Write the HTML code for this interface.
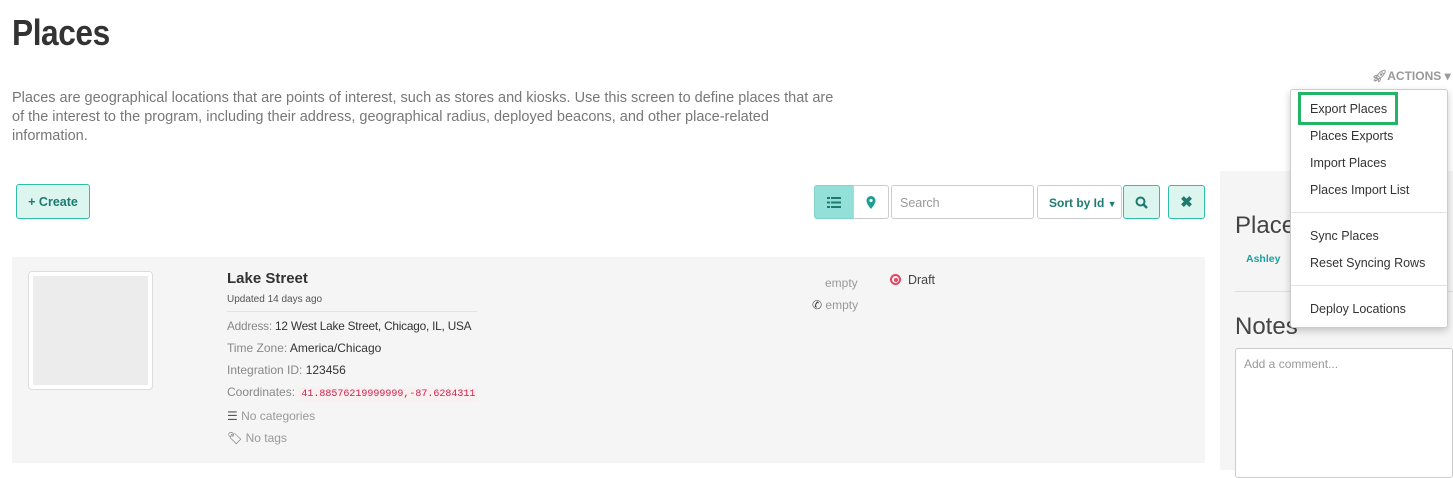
<!DOCTYPE html>
<html><head><style>
*{box-sizing:border-box;margin:0;padding:0}
body{width:1453px;height:470px;overflow:hidden;background:#fff;font-family:"Liberation Sans",sans-serif;color:#333;position:relative}
.a{position:absolute;white-space:nowrap}
h1{position:absolute;left:12px;top:12px;font-size:36px;font-weight:bold;color:#333;letter-spacing:-0.5px;transform:scaleX(0.88);transform-origin:left}
.desc{left:12px;top:89px;width:830px;font-size:14.5px;line-height:19px;color:#777;white-space:normal}
.btn{position:absolute;border:1px solid #2ebfa5;background:#dcf5ef;border-radius:3px;color:#1e7a70;font-weight:bold;font-size:12.5px;display:flex;align-items:center;justify-content:center;white-space:nowrap}
.box{position:absolute;border:1px solid #ccc;border-radius:3px;background:#fff;white-space:nowrap}
.card{left:12px;top:257px;width:1193px;height:206px;background:#f5f5f5}
.lbl{color:#888}
.row{position:absolute;left:227px;font-size:12px;color:#333;white-space:nowrap}
.menu{left:1290px;top:89px;width:158px;height:239px;background:#fff;border:1px solid #ccc;border-radius:3px;box-shadow:0 3px 8px rgba(0,0,0,.2)}
.mi{position:absolute;left:19px;font-size:12.5px;color:#333;white-space:nowrap}
</style></head><body>
<h1>Places</h1>
<div class="a desc">Places are geographical locations that are points of interest, such as stores and kiosks. Use this screen to define places that are of the interest to the program, including their address, geographical radius, deployed beacons, and other place-related information.</div>
<div class="a" style="left:1372px;top:69px;font-size:12px;font-weight:bold;color:#999">&#x1F680;&#xFE0E;ACTIONS ▾</div>

<div class="btn" style="left:16px;top:184px;width:74px;height:35px">+&nbsp;Create</div>

<div class="btn" style="left:814px;top:185px;width:40px;height:34px;background:#93e0d8;border-color:#7fd3c9;border-radius:3px 0 0 3px">
<svg width="14" height="11"><g fill="#1e7a70"><rect x="0" y="0" width="3" height="2"/><rect x="4" y="0" width="10" height="2"/><rect x="0" y="4.5" width="3" height="2"/><rect x="4" y="4.5" width="10" height="2"/><rect x="0" y="9" width="3" height="2"/><rect x="4" y="9" width="10" height="2"/></g></svg></div>
<div class="box" style="left:853px;top:185px;width:36px;height:34px;border-radius:0 3px 3px 0;display:flex;align-items:center;justify-content:center">
<svg width="10" height="13"><path d="M5 0a4.5 4.5 0 0 1 4.5 4.5C9.5 8 5 13 5 13S.5 8 .5 4.5A4.5 4.5 0 0 1 5 0z" fill="#1e9e90"/><circle cx="5" cy="4.5" r="1.6" fill="#fff"/></svg></div>
<div class="box" style="left:891px;top:185px;width:143px;height:34px;font-size:12.5px;color:#999;padding:10px 8px">Search</div>
<div class="box" style="left:1037px;top:185px;width:85px;height:34px;font-size:12px;font-weight:bold;color:#1e7a70;padding:10px 0 0 11px">Sort by Id <span style="font-size:9px">▼</span></div>
<div class="btn" style="left:1123px;top:185px;width:37px;height:34px">
<svg width="13" height="13"><circle cx="5.5" cy="5.5" r="4" stroke="#1e7a70" stroke-width="2" fill="none"/><path d="M8.5 8.5l3.5 3.5" stroke="#1e7a70" stroke-width="2.4"/></svg></div>
<div class="btn" style="left:1168px;top:185px;width:37px;height:34px;font-size:15px">✖</div>

<div class="a card"></div>
<div class="a" style="left:28px;top:271px;width:125px;height:119px;border:1px solid #ddd;border-radius:4px;background:#fff;padding:4px"><div style="background:#ececec;width:100%;height:100%"></div></div>
<div class="row" style="top:270px;font-size:15px;font-weight:bold;color:#333">Lake Street</div>
<div class="row" style="top:294px;font-size:10px;color:#555">Updated 14 days ago</div>
<div class="a" style="left:227px;top:311px;width:250px;border-top:1px solid #e3e3e3"></div>
<div class="row" style="top:319px;font-size:11.8px;letter-spacing:-0.2px"><span class="lbl">Address:</span> 12 West Lake Street, Chicago, IL, USA</div>
<div class="row" style="top:341px"><span class="lbl">Time Zone:</span> America/Chicago</div>
<div class="row" style="top:363px"><span class="lbl">Integration ID:</span> 123456</div>
<div class="row" style="top:385px"><span class="lbl">Coordinates:</span> <span style="font-family:'Liberation Mono',monospace;font-size:10px;color:#d6204b;background:#f9f0f2;padding:2px 3px">41.88576219999999,-87.6284311</span></div>
<div class="row" style="top:409px;color:#999"><span style="color:#555">☰</span> No categories</div>
<div class="row" style="top:431px;color:#999"><span style="color:#555">&#x1F3F7;&#xFE0E;</span> No tags</div>
<div class="a" style="left:825px;top:276px;font-size:12px;color:#999">empty</div>
<div class="a" style="left:812px;top:298px;font-size:12px;color:#999"><span style="color:#444">✆</span> empty</div>
<div class="a" style="left:890px;top:273px;font-size:12.5px;color:#444"><span style="display:inline-block;width:11px;height:11px;border:2px solid #e8455f;border-radius:50%;vertical-align:-1px;position:relative"><span style="position:absolute;left:1.5px;top:1.5px;width:4px;height:4px;background:#e8455f;border-radius:50%"></span></span>&nbsp; Draft</div>

<div class="a" style="left:1220px;top:171px;width:233px;height:299px;background:#f5f5f5"></div>
<div class="a" style="left:1235px;top:212px;font-size:24px;color:#444">Places</div>
<div class="a" style="left:1246px;top:253px;font-size:10.5px;font-weight:bold;color:#1ea0a0">Ashley</div>
<div class="a" style="left:1235px;top:291px;width:218px;border-top:1px solid #ddd"></div>
<div class="a" style="left:1235px;top:313px;font-size:24px;color:#444">Notes</div>
<div class="a" style="left:1235px;top:348px;width:218px;height:130px;background:#fff;border:1px solid #ccc;border-radius:3px;padding:8px;font-size:12px;color:#999">Add a comment...</div>

<div class="a menu">
<div class="mi" style="top:12px">Export Places</div>
<div class="mi" style="top:39px">Places Exports</div>
<div class="mi" style="top:66px">Import Places</div>
<div class="mi" style="top:93px">Places Import List</div>
<div class="a" style="left:0;top:122px;width:156px;border-top:1px solid #e3e3e3"></div>
<div class="mi" style="top:139px">Sync Places</div>
<div class="mi" style="top:166px">Reset Syncing Rows</div>
<div class="a" style="left:0;top:195px;width:156px;border-top:1px solid #e3e3e3"></div>
<div class="mi" style="top:212px">Deploy Locations</div>
</div>
<div class="a" style="left:1298px;top:92px;width:100px;height:33px;border:3px solid #22b566"></div>
</body></html>
